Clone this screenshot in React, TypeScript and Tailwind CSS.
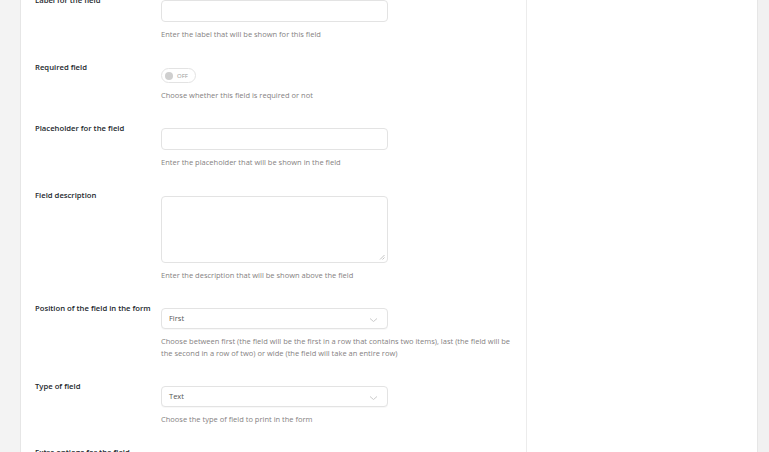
import React from "react";

const font = { fontFamily: '"Open Sans", "Noto Sans", Arial, sans-serif' };

function Chevron() {
  return (
    <svg width="9" height="6" viewBox="0 0 9 6" className="absolute right-[9px] top-[8px]">
      <path d="M1 1.5 L4.5 4.5 L8 1.5" fill="none" stroke="#c4c4c4" strokeWidth="0.9" />
    </svg>
  );
}

function Row({ label, children, help }: { label: string; children: React.ReactNode; help: React.ReactNode }) {
  return (
    <div className="flex">
      <div className="w-[126px] shrink-0 text-[7.7px] leading-[12px] font-semibold text-[#23282d]">{label}</div>
      <div className="flex-1 pt-[6px]">
        {children}
        <div className="mt-[6px] text-[7.5px] leading-[12px] text-[#857f82] pr-[10px]">{help}</div>
      </div>
    </div>
  );
}

function Input() {
  return <div className="w-[227px] h-[22px] rounded-[4px] border border-[#e3e3e3] bg-white" />;
}

function Select({ value }: { value: string }) {
  return (
    <div className="relative w-[227px] h-[21px] rounded-[4px] border border-[#e3e3e3] bg-white shadow-[0_1px_1px_rgba(0,0,0,0.03)] pl-[7px] text-[7.5px] leading-[19px] text-[#555]">
      {value}
      <Chevron />
    </div>
  );
}

export default function App() {
  return (
    <div className="w-[769px] h-[452px] overflow-hidden bg-[#f1f1f1] flex" style={font}>
      <div className="w-[21px] shrink-0 border-r border-[#e6e6e6] bg-[#f3f3f3]" />
      <div className="flex-1 flex bg-white">
        <div className="w-[506px] shrink-0 border-r border-[#ececec] pl-[14px] pt-0">
          <div className="-mt-[6px] flex flex-col gap-[21px]">
            <Row label="Label for the field" help="Enter the label that will be shown for this field">
              <Input />
            </Row>
            <Row label="Required field" help="Choose whether this field is required or not">
              <div className="mt-[1px] w-[35px] h-[15px] rounded-full border border-[#e3e3e3] flex items-center pl-[3px] gap-[4px]">
                <div className="w-[8px] h-[8px] rounded-full bg-[#cfcfcf]" />
                <span className="text-[6px] leading-[8px] text-[#9a9a9a]">OFF</span>
              </div>
            </Row>
            <Row label="Placeholder for the field" help="Enter the placeholder that will be shown in the field">
              <Input />
            </Row>
            <Row label="Field description" help="Enter the description that will be shown above the field">
              <div className="mt-[1px] relative w-[227px] h-[67px] rounded-[4px] border border-[#e3e3e3] bg-white">
                <svg width="6" height="6" viewBox="0 0 6 6" className="absolute right-[2px] bottom-[2px]">
                  <path d="M5.5 1 L1 5.5 M5.5 3.5 L3.5 5.5" stroke="#b5b5b5" strokeWidth="0.8" />
                </svg>
              </div>
            </Row>
            <Row
              label="Position of the field in the form"
              help="Choose between first (the field will be the first in a row that contains two items), last (the field will be the second in a row of two) or wide (the field will take an entire row)"
            >
              <Select value="First" />
            </Row>
            <Row label="Type of field" help="Choose the type of field to print in the form">
              <Select value="Text" />
            </Row>
            <Row label="Extra options for the field" help="">
              <Input />
            </Row>
          </div>
        </div>
        <div className="flex-1" />
      </div>
      <div className="w-[12px] shrink-0 border-l border-[#e6e6e6] bg-[#f1f1f1]" />
    </div>
  );
}
